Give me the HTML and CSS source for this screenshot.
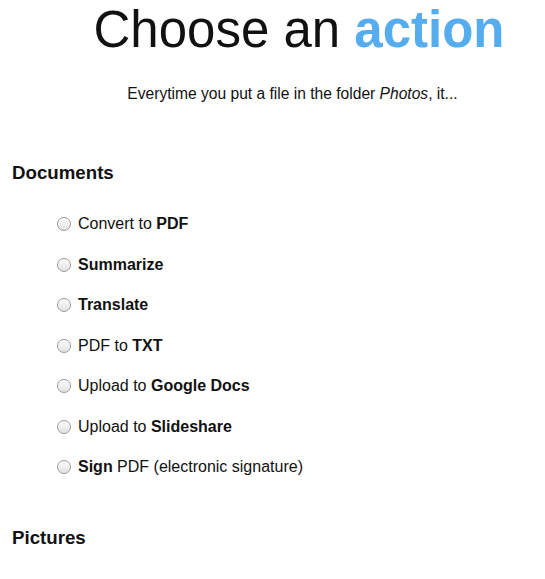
FILE: index.html
```html
<!DOCTYPE html>
<html>
<head>
<meta charset="utf-8">
<link rel="stylesheet" href="styles.css">
</head>
<body>
<header class="intro">
  <h1 class="title">Choose an <b class="accent">action</b></h1>
  <p class="subtitle">Everytime you put a file in the folder <i>Photos</i>, it...</p>
</header>
<section class="group">
  <h3 class="group-title">Documents</h3>
  <ul class="options">
    <li class="option"><span class="radio"></span><span>Convert to <b>PDF</b></span></li>
    <li class="option"><span class="radio"></span><span><b>Summarize</b></span></li>
    <li class="option"><span class="radio"></span><span><b>Translate</b></span></li>
    <li class="option"><span class="radio"></span><span>PDF to <b>TXT</b></span></li>
    <li class="option"><span class="radio"></span><span>Upload to <b>Google Docs</b></span></li>
    <li class="option"><span class="radio"></span><span>Upload to <b>Slideshare</b></span></li>
    <li class="option"><span class="radio"></span><span><b>Sign</b> PDF (electronic signature)</span></li>
  </ul>
</section>
<section class="group">
  <h3 class="group-title">Pictures</h3>
</section>
</body>
</html>
```
FILE: styles.css
```css
html, body {
  margin: 0;
  padding: 0;
  background: #fff;
}
body {
  font-family: "Liberation Sans", Arial, Helvetica, sans-serif;
  color: #111;
  padding: 0 12px;
}
.intro {
  padding-left: 40px;
  text-align: center;
}
.title {
  margin: 0;
  padding: 1px 0 0 13px;
  font-size: 51px;
  line-height: 58px;
  font-weight: normal;
  color: #111;
}
.accent {
  color: #55acee;
  font-weight: bold;
}
.subtitle {
  margin: 26px 0 0;
  font-size: 15.6px;
  line-height: 18px;
}
.group-title {
  margin: 59px 0 0;
  font-size: 18.7px;
  line-height: 22px;
  font-weight: bold;
}
.options {
  list-style: none;
  margin: 31px 0 0;
  padding: 0 0 0 45px;
  display: flex;
  flex-direction: column;
  gap: 22.5px;
}
.option {
  display: flex;
  align-items: center;
  gap: 7px;
  font-size: 16px;
  line-height: 18px;
}
.radio {
  width: 12px;
  height: 12px;
  border-radius: 50%;
  border: 1px solid #9a9a9a;
  background: linear-gradient(#fdfdfd, #e2e2e2);
  box-shadow: inset 0 1px 1px rgba(255,255,255,0.8);
  flex: none;
}
.group + .group .group-title {
  margin-top: 51px;
}
```
